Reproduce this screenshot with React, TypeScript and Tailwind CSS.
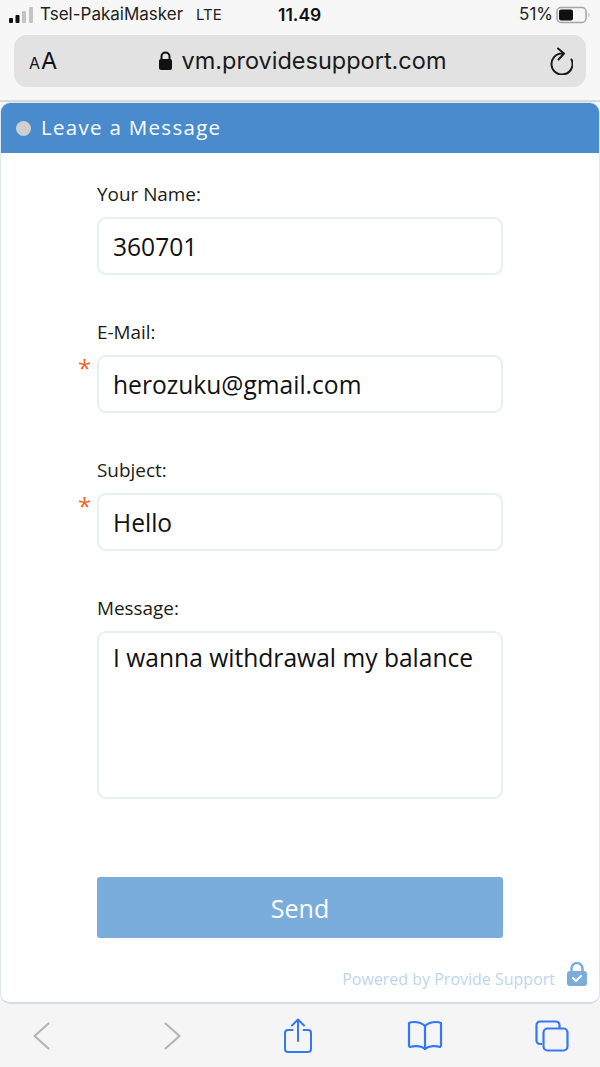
import React from "react";

const openSans = "[font-family:'Open_Sans',sans-serif]";

function Field({ label, value, required }: { label: string; value: string; required?: boolean }) {
  return (
    <div className="relative w-[406px] mb-[45px]">
      <div className="text-[18.900px] leading-[25px] h-[25px] mb-[10px] text-[#1a1a1a]">{label}</div>
      {required && (
        <span className="absolute left-[-19px] top-[36px] text-[24px] leading-[24px] text-[#f0622f]">*</span>
      )}
      <div className="h-[58px] border-2 border-[#e4eff8] rounded-[9px] px-[14px] pt-[2px] flex items-center text-[24.600px] text-[#111] bg-white">
        {value}
      </div>
    </div>
  );
}

export default function App() {
  return (
    <div className={`w-[600px] h-[1067px] flex flex-col bg-[#f6f6f6] overflow-hidden ${openSans}`}>
      {/* Safari top chrome */}
      <div className="h-[102px] shrink-0 border-b-2 border-[#d9d9d9] bg-[#f7f7f7] px-[14px] [font-family:Inter,sans-serif]">
        <div className="h-[35px] relative flex items-center justify-between pb-[5px]">
          <div className="flex items-center gap-[6px] ml-[-5px]">
            <svg width="25" height="18" viewBox="0 0 25 18">
              <rect x="0" y="12" width="4" height="5" rx="1" fill="#111" />
              <rect x="6.500" y="9" width="4" height="8" rx="1" fill="#111" />
              <rect x="13" y="5" width="4" height="12" rx="1" fill="#c4c4c4" />
              <rect x="20" y="1" width="4" height="16" rx="1" fill="#c4c4c4" />
            </svg>
            <span className="text-[17px] text-[#222]">Tsel-PakaiMasker</span>
            <span className="text-[15px] text-[#222] ml-[7px]">LTE</span>
          </div>
          <span className="absolute left-[264px] top-[2px] text-[17.500px] font-semibold text-[#111]">11.49</span>
          <div className="flex items-center gap-[3px] mr-[-6px]">
            <span className="text-[17px] text-[#222]">51%</span>
            <svg width="36" height="18" viewBox="0 0 36 18">
              <rect x="1" y="1.500" width="29" height="15" rx="4" fill="none" stroke="#a5a5a5" strokeWidth="1.500" />
              <rect x="3" y="3.500" width="14" height="11" rx="2" fill="#111" />
              <path d="M32.500 6.500 q2 2.500 0 5z" fill="#a5a5a5" />
            </svg>
          </div>
        </div>
        <div className="h-[52px] rounded-[13px] bg-[#e2e2e2] flex items-center px-[15px] relative">
          <span className="text-[#111] leading-none flex items-baseline w-[32px] [font-family:Inter,sans-serif] whitespace-nowrap">
            <span className="text-[16px]">A</span>
            <span className="text-[23.500px] ml-[1px]">A</span>
          </span>
          <div className="flex-1 flex items-center justify-center gap-[9px] pr-[6px]">
            <svg width="15" height="20" viewBox="0 0 15 20">
              <path d="M3.500 9V5.500a4 4 0 0 1 8 0V9" fill="none" stroke="#111" strokeWidth="2" />
              <rect x="1" y="8" width="13" height="11" rx="2" fill="#111" />
            </svg>
            <span className="text-[23.500px] text-[#1a1a1a]">vm.providesupport.com</span>
          </div>
          <svg width="24" height="28" viewBox="0 0 24 28" className="mr-[-2px]" fill="none" stroke="#1a1a1a" strokeWidth="2" strokeLinecap="round" strokeLinejoin="round">
            <path d="M13 6.500A10.500 10.500 0 1 0 22.500 12.500" />
            <path d="M9 1.500L15 6.500L9.500 12.500" />
          </svg>
        </div>
      </div>

      {/* Chat panel */}
      <div className="h-[902px] shrink-0 bg-white rounded-[10px] border border-[#dbe8f4] border-b-2 border-b-[#d3dee8] overflow-hidden flex flex-col">
        <div className="h-[50px] shrink-0 bg-[#4a8bcd] flex items-center pl-[15px] gap-[10px]">
          <span className="w-[15px] h-[15px] rounded-full bg-[#cfcfcf]" />
          <span className="text-[20.500px] tracking-[1.300px] text-white mb-[2px]">Leave a Message</span>
        </div>
        <div className="flex-1 flex flex-col items-center pt-[29px] relative">
          <Field label="Your Name:" value="360701" />
          <Field label="E-Mail:" value="herozuku@gmail.com" required />
          <Field label="Subject:" value="Hello" required />
          <div className="w-[406px]">
            <div className="text-[18.900px] leading-[25px] h-[25px] mb-[10px] text-[#1a1a1a]">Message:</div>
            <div className="h-[168px] border-2 border-[#e4eff8] rounded-[9px] px-[14px] pt-[7px] text-[24.600px] leading-[36px] text-[#111]">
              I wanna withdrawal my balance
            </div>
          </div>
          <div className="w-[406px] h-[61px] mt-[78px] pt-[3px] rounded-[3px] bg-[#7aaddc] flex items-center justify-center text-[25px] text-white">
            Send
          </div>
          <div className="absolute right-[12px] bottom-[6px] flex items-center gap-[12px]">
            <span className="text-[16px] text-[#bcd6ee]">Powered by Provide Support</span>
            <svg width="20" height="24" viewBox="0 0 20 24" className="mb-[10px]">
              <path d="M4.500 11V6.500a5.500 5.500 0 0 1 11 0V11" fill="none" stroke="#7aaddc" strokeWidth="2.500" />
              <rect x="0" y="9" width="20" height="15" rx="3" fill="#7aaddc" />
              <path d="M6 16l3 3 5-5" fill="none" stroke="#fff" strokeWidth="2" strokeLinecap="round" strokeLinejoin="round" />
            </svg>
          </div>
        </div>
      </div>

      {/* Safari bottom toolbar */}
      <div className="flex-1 flex items-center pl-[33px] bg-[#f5f5f5]">
        <svg width="17" height="28" viewBox="0 0 17 28" fill="none" stroke="#b5b5b5" strokeWidth="2.200" strokeLinecap="round" strokeLinejoin="round">
          <path d="M15.500 1.500L1.500 14 15.500 26.500" />
        </svg>
        <svg width="17" height="28" viewBox="0 0 17 28" className="ml-[114px]" fill="none" stroke="#b5b5b5" strokeWidth="2.200" strokeLinecap="round" strokeLinejoin="round">
          <path d="M1.500 1.500L15.500 14 1.500 26.500" />
        </svg>
        <svg width="28" height="36" viewBox="0 0 28 36" className="ml-[103px]" fill="none" stroke="#3478f6" strokeWidth="2" strokeLinecap="round" strokeLinejoin="round">
          <path d="M8.500 12H4a3 3 0 0 0-3 3v16a3 3 0 0 0 3 3h20a3 3 0 0 0 3-3V15a3 3 0 0 0-3-3h-4.500" />
          <path d="M14 23V2" />
          <path d="M8 7.500L14 1.500l6 6" />
        </svg>
        <svg width="36" height="32" viewBox="0 0 36 32" className="ml-[95px]" fill="none" stroke="#3478f6" strokeWidth="2.200" strokeLinecap="round" strokeLinejoin="round">
          <path d="M18 6C15 3 11 2 7 2 5 2 3 2.500 2 3v23l1 1c4-1.500 11-1.500 15 2 4-3.500 11-3.500 15-2l1-1V3c-1-.5-3-1-5-1-4 0-8 1-11 4z" />
          <path d="M18 6v23" />
        </svg>
        <svg width="34" height="32" viewBox="0 0 34 32" className="ml-[92px]" fill="none" stroke="#3478f6" strokeWidth="2.200" strokeLinejoin="round">
          <path d="M7 24H5a3.500 3.500 0 0 1-3.500-3.500V5A3.500 3.500 0 0 1 5 1.500h16A3.500 3.500 0 0 1 24.500 5v3" />
          <rect x="8.500" y="8.500" width="24" height="22" rx="4" />
        </svg>
      </div>
    </div>
  );
}
